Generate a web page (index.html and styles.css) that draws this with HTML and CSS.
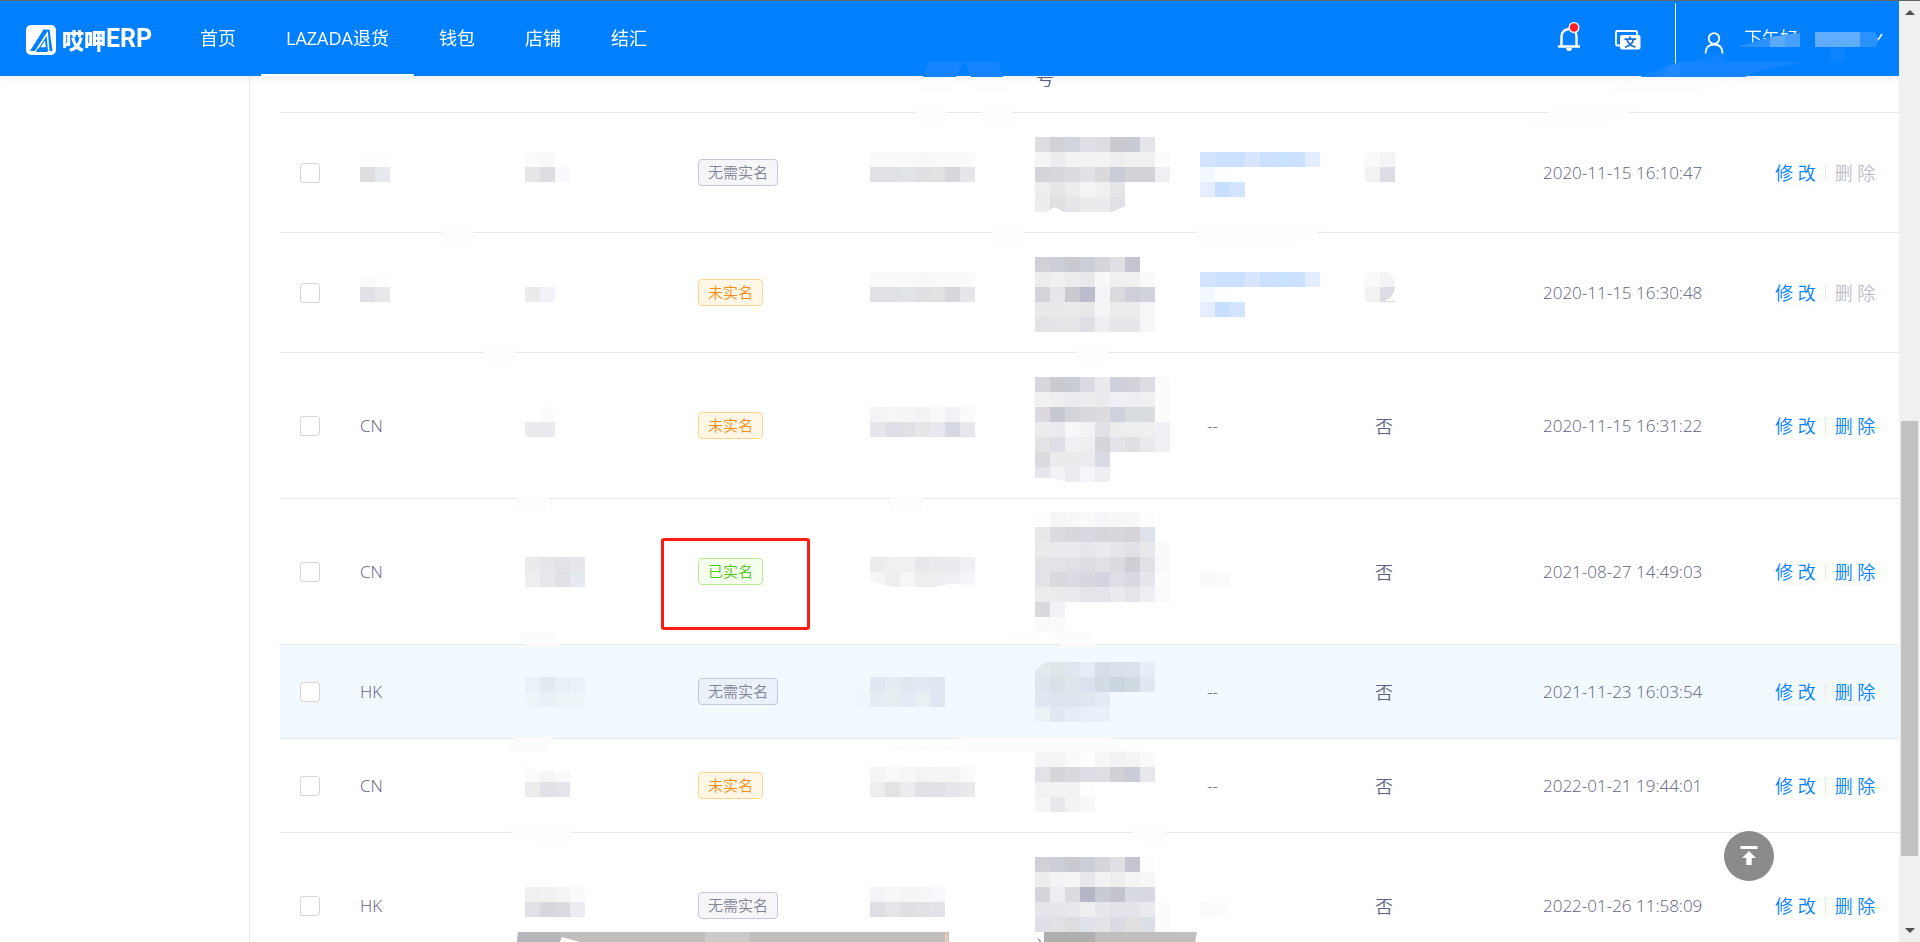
FILE: index.html
```html
<!DOCTYPE html>
<html lang="zh-CN">
<head>
<meta charset="utf-8">
<title>哎呷ERP</title>
<link rel="stylesheet" href="styles.css">
</head>
<body>
<header class="topbar">
  <a class="logo" href="#">
    <svg class="logo-mark" viewBox="0 0 30 30" aria-hidden="true"><rect width="30" height="30" rx="5" fill="#fff"/><path d="M4 26 17.500 4.500H23.500L26.500 26Z" fill="#007fff"/><path d="M9.500 26.500 21.200 8.500 22.800 26.500" fill="none" stroke="#fff" stroke-width="1.600"/><path d="M14.500 22.200H19.800L19 15.500Z" fill="#fff"/><path d="M11.500 23.500H21.500V27H10Z" fill="#007fff"/></svg>
    <span class="logo-cn">哎呷</span><span class="logo-en">ERP</span>
  </a>
  <nav class="nav">
    <a href="#">首页</a>
    <a href="#" class="active">LAZADA退货</a>
    <a href="#">钱包</a>
    <a href="#">店铺</a>
    <a href="#">结汇</a>
  </nav>
  <div class="tools">
    <button class="icon-btn" aria-label="通知">
      <svg width="24" height="30" viewBox="0 0 24 30"><path d="M4.500 24V14.500a7.500 7.500 0 0 1 15 0V24M1 24.500H23" fill="none" stroke="#fff" stroke-width="2.400"/><path d="M9 26h6a3 3 0 0 1-6 0Z" fill="#fff"/><circle cx="17" cy="5.500" r="5.500" fill="#fff"/><circle cx="17" cy="5.500" r="4.200" fill="#fa1e28"/></svg>
    </button>
    <button class="icon-btn" aria-label="语言">
      <svg width="26" height="20" viewBox="0 0 26 20"><path d="M5 15.500H2.200A1.200 1.200 0 0 1 1 14.300V2.200A1.200 1.200 0 0 1 2.200 1H20.800A1.200 1.200 0 0 1 22 2.200V5" fill="none" stroke="#fff" stroke-width="1.800"/><rect x="5" y="5" width="20.500" height="14.500" rx="2" fill="#fff"/><path d="M9.500 9.200H21M15 6.500V9M18.500 9.500C17.500 13.500 14.500 16 10 17.200M12 9.500C13 13.500 16 16 20.500 17.200" fill="none" stroke="#1673dd" stroke-width="1.700"/></svg>
    </button>
  </div>
  <button class="user">
    <svg width="20" height="22" viewBox="0 0 20 22"><circle cx="10" cy="6.500" r="5.300" fill="none" stroke="#fff" stroke-width="1.800"/><path d="M1.500 21.500C1.500 15.500 5 12.500 10 12.500S18.500 15.500 18.500 21.500" fill="none" stroke="#fff" stroke-width="1.800"/></svg>
    <span>下午好</span>
    <svg class="user-mask" width="260" height="76" viewBox="1639 1 260 76" aria-hidden="true">
      <path d="M1739 47H1899V70H1739Z" fill="#007fff"/>
      <path d="M1640 77 1660 69 1680 62H1804L1762 70 1745 77Z" fill="#1485ff"/>
      <path d="M1665 67 1680 62V77H1665Z" fill="#2089ff"/>
      <path d="M1695 59 1725 54V62H1695Z" fill="#0c83ff"/>
      <path d="M1740 46 1770 37 1800 33V47H1740Z" fill="#2b91ff"/>
      <path d="M1770 37 1785 35V47H1770Z" fill="#5aabff"/>
      <path d="M1785 35 1800 33V47H1785Z" fill="#479fff"/>
      <path d="M1815 32H1860V47H1815Z" fill="#60adff"/>
      <path d="M1860 32H1875L1879 40 1876 47H1860Z" fill="#2b91ff"/>
      <path d="M1830 47H1845V61H1830Z" fill="#0c83ff"/>
      <path d="M1878 40 1882 34" stroke="#fff" stroke-width="1.400"/>
    </svg>
  </button>
</header>
<div class="layout">
  <aside class="side"></aside>
  <main class="content">
    <table class="list">
      <colgroup><col class="c-check"><col class="c-std"><col class="c-std"><col class="c-std"><col class="c-std"><col class="c-std"><col class="c-std"><col class="c-std"><col><col class="c-act"></colgroup>
      <thead><tr><th></th><th></th><th></th><th></th><th></th><th>号</th><th></th><th></th><th></th><th></th></tr></thead>
      <tbody>
        <tr data-top="113" data-height="119">
          <td><input type="checkbox" aria-label="选择"></td><td class="mask" data-m="r1a"></td><td class="mask" data-m="r1b"></td>
          <td><span class="tag">无需实名</span></td><td class="mask" data-m="r1c"></td><td class="mask" data-m="r1d"></td><td class="mask" data-m="r1e"></td><td class="mask" data-m="r1f"></td>
          <td>2020-11-15 16:10:47</td><td><div class="acts"><button>修 改</button><i></i><button disabled>删 除</button></div></td>
        </tr>
        <tr data-top="233" data-height="119">
          <td><input type="checkbox" aria-label="选择"></td><td class="mask" data-m="r2a"></td><td class="mask" data-m="r2b"></td>
          <td><span class="tag orange">未实名</span></td><td class="mask" data-m="r2c"></td><td class="mask" data-m="r2d"></td><td class="mask" data-m="r2e"></td><td class="mask" data-m="r2f"></td>
          <td>2020-11-15 16:30:48</td><td><div class="acts"><button>修 改</button><i></i><button disabled>删 除</button></div></td>
        </tr>
        <tr data-top="353" data-height="145">
          <td><input type="checkbox" aria-label="选择"></td><td>CN</td><td class="mask" data-m="r3b"></td>
          <td><span class="tag orange">未实名</span></td><td class="mask" data-m="r3c"></td><td class="mask" data-m="r3d"></td><td class="none">--</td><td class="cn">否</td>
          <td>2020-11-15 16:31:22</td><td><div class="acts"><button>修 改</button><i></i><button>删 除</button></div></td>
        </tr>
        <tr data-top="499" data-height="145">
          <td><input type="checkbox" aria-label="选择"></td><td>CN</td><td class="mask" data-m="r4b"></td>
          <td class="marked"><span class="tag green">已实名</span></td><td class="mask" data-m="r4c"></td><td class="mask" data-m="r4d"></td><td class="mask" data-m="r4e"></td><td class="cn">否</td>
          <td>2021-08-27 14:49:03</td><td><div class="acts"><button>修 改</button><i></i><button>删 除</button></div></td>
        </tr>
        <tr class="hover" data-top="645" data-height="93">
          <td><input type="checkbox" aria-label="选择"></td><td>HK</td><td class="mask" data-m="r5b"></td>
          <td><span class="tag">无需实名</span></td><td class="mask" data-m="r5c"></td><td class="mask" data-m="r5d"></td><td class="none">--</td><td class="cn">否</td>
          <td>2021-11-23 16:03:54</td><td><div class="acts"><button>修 改</button><i></i><button>删 除</button></div></td>
        </tr>
        <tr data-top="739" data-height="93">
          <td><input type="checkbox" aria-label="选择"></td><td>CN</td><td class="mask" data-m="r6b"></td>
          <td><span class="tag orange">未实名</span></td><td class="mask" data-m="r6c"></td><td class="mask" data-m="r6d"></td><td class="none">--</td><td class="cn">否</td>
          <td>2022-01-21 19:44:01</td><td><div class="acts"><button>修 改</button><i></i><button>删 除</button></div></td>
        </tr>
        <tr data-top="833" data-height="145">
          <td><input type="checkbox" aria-label="选择"></td><td>HK</td><td class="mask" data-m="r7b"></td>
          <td><span class="tag">无需实名</span></td><td class="mask" data-m="r7c"></td><td class="mask" data-m="r7d"></td><td class="mask" data-m="r7e"></td><td class="cn">否</td>
          <td>2022-01-26 11:58:09</td><td><div class="acts"><button>修 改</button><i></i><button>删 除</button></div></td>
        </tr>
      </tbody>
    </table>
  </main>
</div>
<svg class="smudges" width="1899" height="942" viewBox="0 0 1899 942" aria-hidden="true">
  <path d="M928 62H964L956 77H923ZM966 62H998L1003 77H971Z" fill="#1485ff"/>
  <path d="M923 77H956L950 92H919ZM971 77H1003L1008 92H977ZM915 107H946V122H915ZM982 107H1012V120L1064 122H982ZM1563 107H1640L1610 122H1525ZM443 227H475L471 242H439ZM993 227H1023V242H993ZM1197 227H1330L1296 242H1197ZM484 347H515V362H484ZM1077 347H1108V362H1077ZM518 497H549L546 512H513ZM891 497H922V512H888ZM505 827H572L569 842H536L533 835 520 838ZM1130 827H1165L1170 842H1138Z" fill="#fdfdfd"/>
  <path d="M1640 77H1745L1695 92H1605Z" fill="#fdfdfd"/>
  <path d="M518 632H555L562 647H527ZM1007 632H1035L1048 627 1060 632H1090L1098 647H1062L1048 627 1030 638H1015Z" fill="#fafcfe"/>
  <path d="M516 737H553L545 752H506ZM957 737H1112L1120 748 1154 752H970L940 750 882 750 900 745 968 746Z" fill="#fbfdfd"/>
</svg>
<a class="to-top" href="#" aria-label="返回顶部"><svg width="18" height="20" viewBox="0 0 18 20"><path d="M.500 0H17.500V3H.500ZM9 5 16 12H11.700V19H6.300V12H2Z" fill="#fff"/></svg></a>
<div class="scroll" aria-hidden="true"><b class="up"></b><span class="thumb"></span><b class="down"></b></div>
<script src="mosaic.js"></script>
</body>
</html>
```
FILE: styles.css
```css
*, *::before, *::after { box-sizing: border-box; }
html, body { height: 100%; overflow: hidden; }
body {
  margin: 0;
  background: #fff;
  color: #5c6082;
  font: 350 17px/24px "Open Sans", "Noto Sans CJK SC", sans-serif;
}
button { font: inherit; color: inherit; border: 0; background: none; padding: 0; cursor: pointer; }
a { text-decoration: none; color: inherit; }

.topbar {
  position: fixed;
  z-index: 5;
  top: 0; left: 0; right: 21px;
  height: 76px;
  display: flex;
  align-items: stretch;
  padding-left: 26px;
  background: #007fff;
  color: #fff;
  border-top: 1px solid #5f6670;
  box-shadow: 0 1px 8px rgba(0, 21, 41, .1);
}
.logo { display: flex; align-items: center; width: 149px; white-space: nowrap; }
.logo-mark { width: 30px; height: 30px; margin: 3px 6px 0 0; }
.logo-cn { font: 900 22px/30px "Noto Sans CJK SC", sans-serif; }
.logo-en { font: 700 25px/30px Roboto, sans-serif; }
.nav { display: flex; }
.nav a {
  padding: 0 25px;
  font-size: 18px;
  line-height: 74px;
  border-bottom: 2px solid transparent;
  font-weight: 400;
  white-space: nowrap;
}
.nav a.active { border-color: #fff; }
.tools { display: flex; align-items: center; gap: 34px; margin-left: auto; padding-right: 34px; }
.icon-btn { display: flex; padding-top: 2px; }
.icon-btn:first-child { padding: 0 0 3px; }
.user {
  position: relative;
  display: flex;
  align-items: center;
  gap: 20px;
  width: 224px;
  padding: 8px 0 0 29px;
  font-size: 18px;
}
.user span { padding-bottom: 9px; }
.user::before { content: ""; position: absolute; left: 0; top: 2px; height: 61px; width: 1px; background: #fff; }
.user-mask { position: absolute; right: 0; top: 0; }

.layout { display: flex; min-height: 100%; padding-top: 64px; }
.side { flex: 0 0 250px; border-right: 1px solid #e8e8e8; }
.content { flex: 1; min-width: 0; padding: 0 21px 0 30px; }
.list { width: 100%; table-layout: fixed; border-spacing: 0; }
.c-check { width: 64px; }
.c-std { width: 169px; }
.c-act { width: 140px; }
.list th, .list td { padding: 0 16px; border-bottom: 1px solid #e8e8e8; text-align: left; font-weight: inherit; white-space: nowrap; }
.list th { height: 49px; vertical-align: top; padding-top: 2px; font-size: 18px; }
.list td:first-child { padding-left: 20px; }
.list .cn { padding-left: 17px; font-size: 18px; }
.list .none { padding-left: 18px; }
.list .mask { padding: 0; }
.mask svg { display: block; width: 100%; overflow: visible; }
.hover { background: #f2faff; }
.marked { position: relative; }
.marked::after {
  content: "";
  position: absolute;
  left: -21px; top: 39px;
  width: 149px; height: 92px;
  border: 3px solid #ff1c10;
  border-radius: 3px;
}
input[type="checkbox"] {
  appearance: none;
  display: block;
  width: 20px; height: 20px;
  margin: 0;
  border: 1px solid #d5d5d5;
  border-radius: 3px;
  background: #fff;
}
.tag {
  display: block;
  width: max-content;
  padding: 0 9px;
  font-size: 15px;
  line-height: 25px;
  border: 1px solid #c3c8dc;
  border-radius: 4px;
  color: #808495;
  background: rgba(128, 132, 149, .07);
}
.hover .tag { background: #eaf1f8; }
.tag.orange { color: #fa8c16; border-color: #ffd591; background: #fff7e6; }
.tag.green { color: #52c41a; border-color: #b7eb8f; background: #f6ffed; }
.acts { display: flex; align-items: center; gap: 9px; color: #007fff; font-size: 18px; }
.acts button { border-radius: 4px; box-shadow: 0 2px 0 rgba(0, 0, 0, .016); }
.acts button:disabled { color: #bcbcc8; box-shadow: none; }
.acts i { width: 1px; height: 15px; background: #e8e8e8; }

.smudges { position: fixed; z-index: 6; left: 0; top: 0; pointer-events: none; }
.to-top {
  position: fixed;
  z-index: 4;
  right: 146px; bottom: 61px;
  width: 50px; height: 50px;
  display: flex;
  align-items: center;
  justify-content: center;
  border-radius: 50%;
  background: #8b8b8b;
}
.scroll {
  position: fixed;
  z-index: 7;
  top: 0; right: 0; bottom: 0;
  width: 21px;
  border-top: 1px solid #5f6670;
  background: #f0f0f0;
}
.thumb { position: absolute; left: 2px; right: 2px; top: 420px; bottom: 86px; background: #c1c1c1; }
.scroll b { position: absolute; left: 6px; border: 5px solid transparent; }
.scroll .up { top: 4px; border-bottom-color: #505050; }
.scroll .down { bottom: 4px; border-top-color: #505050; }
```
FILE: mosaic.js
```js
// Pixelated blocks that hide private values. Each entry: [x, y, rows of cell colours].
const CELL = 15;
const phone = 'fafafa fafafa fafafa f8f8f8 f9f9f9 f9faf9 fafafa|e0e1e4 e0e1e4 e0e4e6 e0e0e4 e1e1e2 d6d7dd e5e6e9';
const blue = 'd2e4ff cae0ff cce1ff d6e6ff cce0ff cae0ff cbe1ff e2edff|f3f7ff fbfdff|e5efff c8deff d2e4ff';
const blocks = {
  r1a: [360, 152, 'fdfdfd fdfdfd|dedede e6eaee'],
  r1b: [525, 152, 'fbfbfb f9f9f9|e6e6e8 dddde2 f8f9fc'],
  r1c: [870, 152, phone],
  r1d: [1035, 137, 'dddee1 d3d0d6 d3d5de dfdfe8 dcdde1 cac9cf c8cad3 e5e6ec|f5f5f5 ededf0 f3f3f3 f3f3f3 f3f3f4 eeeef0 f1f1f3 f1f1f3 fcfcfc|d3d4d9 d6d7dc dbdce0 e1e2e8 dbd9de c9ccd6 d2d3d8 d3d3d7 efeff4|eeeeef e6e6e7 ececee f4f5f6 eff0f1 e5e5e8|ecedee e0e0e1 e5e6ea ebebed ebebed e0e1e6',
    'M1045 213 1055 207 1066 213ZM1110 213 1125 206V213Z'],
  r1e: [1200, 152, blue],
  r1f: [1365, 152, 'fafafa f4f4f6|f2f2f2 dddee4'],
  r2a: [360, 272, 'f9f9f9 fdfdfd|e1e0e6 e7e8ec', 'M359 271H391V277H359Z'],
  r2b: [525, 287, 'ebebeb f2f3f8'],
  r2c: [870, 272, phone],
  r2d: [1035, 257, 'd3d1d8 cccfd7 c9cacf ccced8 d5d6da dfdfe5 c5c4d1|ededef f0f0f3 ececef e9e9ed f7f8f8 f0f0f2 f0f0f2 f9f9f9|d3d4da e7e6ec c9cad0 babbcb f4f5f7 dadadf cfcfda d1d3dc|e9e9eb e9e9eb eaebed e8e8ea f3f5f7 ececef ececee f6f6f8|e2e2e7 e4e5e9 e6e5e8 dfdee4 edeef2 e6e7eb e6e7ea f5f6f8'],
  r2e: [1200, 272, blue],
  r2f: [1365, 272, 'fafafa f4f4f6|f2f2f2 dcdde3', 'M1387 271Q1395 276 1395 286V271ZM1395 288Q1393 298 1385 301H1396Z'],
  r3b: [525, 407, 'ffffff fbfbfb|ebebef ebebef', 'M524 432Q525 436 529 438H524ZM549 407 556 417V407Z'],
  r3c: [870, 407, 'f4f4f6 f6f6f6 f4f5f7 f4f3f4 f8f9fb f3f3f7 fafafb|e6e7ed dedfe7 e0e1e5 e9e6e9 e8e9ee d6d8e3 e7e7ed'],
  r3d: [1035, 377, 'd7d8de cacbd1 c9ccd4 dadae5 eaeaec ced1dc d3d2da dddee3 fbfdfc|f0f1f3 eeeff1 ebecf1 ededef ebebee eef0f5 eeeff2 f0f0f2 fbfdfc|dbd9df c6c8d2 d3d3da d8d9df dcdcde cdd2dc d9dde1 d8dcdf fbfdfc|ececee e9ebef f6f8fa f3f3f3 e3e1e7 ededed eeeeef efefef f0f1f7|e3e3e5 dddee6 f0f1f4 eeeff1 d4d5d9 e3e4e9 dfdfe6 e9eaed f0f1f6|dadbdf ebebed eaebec ebecef d9dbe4|e8e6ed f2f3f5 ecebf1 f5f6f9 eeeff2', 'M1034 478H1048Q1060 479 1070 483H1034Z'],
  r4b: [525, 557, 'ebebee e5e5ea e3e2e8 e6e6ec|eeeef0 e8e8ec e2e0e7 e6e9ef'],
  r4c: [870, 557, 'ececee f0f0f2 eff0f2 e8e8ec e9eaee ebebef f0f0f4|f5f6f8 eeeef0 f5f6f8 eeeef0 eeeef0 eff0f6 f4f5f8', 'M869 580 880 584 896 587H869ZM931 588 950 584 976 585V588Z'],
  r4d: [1035, 512, 'fcfdfc f5f6f8 f6f8fa f9faf9 f5f6f9 f7f7f7 f8f8f9 fdfdfd|e7e9ea dbdce0 d9d7dd d9d9e4 d5d7dd d7d8da d4d5da dee2eb|eaeaeb ebebef ebebef e7e6eb eaebef e5e6ea e0e1e6 e9e9ec fafafa|e3e3e7 e2e3e8 e0e1e6 dcdce2 e1e0e7 dadbe0 cfced5 e0e1e5 f8f9fa|e2e3e9 dad9df dbdce3 d7d7df d3d4df dedfe6 d9dae1 e6e7ec fbfcfc|ececee ebebec eaeaee e5e4eb e4e4ea e9eaef e5e4eb efeff3 fbfbfb|d8d9dd f1f1f7|fafafa fafafa'],
  r4e: [1200, 572, 'fafafa fbfbfb'],
  r5b: [525, 677, 'eaf1f7 e2eaf0 e8f0f6 eaf2f8|eef5f9 e9f1f7 edf4f8 edf5f9', 'M579 676H587V682Z'],
  r5c: [855, 677, 'f1f8fc e0e8f1 e4ecf4 dfe7ef e2e9f2 dfe7f1|eff7fb e4ecf4 e6eef2 e3ebf5 e8f0f4 dfe8f1'],
  r5d: [1035, 662, 'e2eaee dee6ea e0e7f0 e5eef7 d6dee7 d9e1e9 dae2eb e7eef7|dde5ed d9e1e8 dfe6eb dae3ed d3dce5 cad5df d1d9e3 e0e8f1|dfe8f1 dde5ee dfe5ef e0e7ef e3ebf4|eaf3f6 e0e8f1 e5eef7 e7eff8 e8f1f8', 'M1034 661H1047L1034 671Z'],
  r6b: [525, 767, 'fafafa f5f5f6 fafafa|ececee e2e1e7 e4e4ea', 'M528 766H571V771H535Z'],
  r6c: [870, 767, 'f4f4f6 f8f9f8 f6f7f9 f4f4f6 f5f5f6 f4f4f6 f9fafc|edeeef e3e3e5 ececef e0e0e6 e1e0e6 e7e6ec e9e9ec'],
  r6d: [1035, 752, 'f5f5f7 f4f4f5 fafafa fefefe f6f6f6 f2f2f4 f4f4f5 fafafa|e2e2e8 d6d6da d7d9dd dcdde6 dedfe3 d1d0d6 c9ccd7 e7e8ed|f2f2f3 f3f3f3 f3f3f3 fdfdfd|f4f5f7 e7e8ec f3f3f5 f7f8fa'],
  r7b: [525, 887, 'f0f0f2 f1f1f3 f4f5f6 fafafa|e0e1e6 d7d8de dadbe1 ebebf1'],
  r7c: [870, 887, 'f3f4f7 f6f7f7 f5f5f7 f6f6f9 f8f9fc|dfdee5 e4e4e9 dfe0e4 e1e1e5 e2e3e9'],
  r7d: [1035, 857, 'd3d1d8 cccfd7 c9cacf ccced8 d5d6da dfdfe5 c5c4d1 fdfdfd|ededef f3f3f5 f5f5f5 e7e7ec f2f2f4 eeeef0 f3f4f6 f6f7f9|d4d5da edeef3 dadadf b5b6c6 c9cbd4 c4c4cf d7d9e3 d8d8e2|e5e5ea e6e6eb e7e7ec eeeff1 e6e6ec e3e3ea e4e3ea ebebef fbfcfb|dedfe7 e0e0e5 dddddf dfe2e8 e3e3e8 dadbe2 e2dfe1 dbdee3 fbfcfb'],
  r7e: [1200, 902, 'fbfbfb fcfcfc']
};
const columnLeft = [280, 344, 513, 682, 851, 1020, 1189, 1358];
const path = (d, fill) => `<path d="${d}" fill="${fill}"/>`;

document.querySelectorAll('.mask').forEach(td => {
  const row = td.parentElement;
  const [x, y, cells, cut] = blocks[td.dataset.m];
  let shapes = '';
  cells.split('|').forEach((line, j) => line.split(' ').forEach((color, i) => {
    shapes += path(`M${x + i * CELL} ${y + j * CELL}h${CELL}v${CELL}h-${CELL}z`, '#' + color);
  }));
  if (cut) shapes += path(cut, row.classList.contains('hover') ? '#f2faff' : '#fff');
  if (td.dataset.m === 'r7b') {
    shapes += path('M518 932H949V942H555L521 937 519 942H517Z', '#c0bdbb')
      + path('M518 932H560V942H517Z', '#b7b6bd') + path('M705 932H750V942H705Z', '#cbcac8')
      + path('M560 942 562 937 580 942Z', '#fff') + path('M945 932H947L949 942H945Z', '#e7cbb8');
  }
  if (td.dataset.m === 'r7d') {
    shapes += path('M1044 932H1197L1195 942H1044Z', '#c0bfbe') + path('M1044 932H1095V942H1044Z', '#aeafae')
      + path('M1037 937 1041 941 1040 942Z', '#5c6082');
  }
  td.innerHTML = `<svg height="${row.dataset.height}" aria-hidden="true"><g transform="translate(${-columnLeft[td.cellIndex]} ${-row.dataset.top})">${shapes}</g></svg>`;
});
```
